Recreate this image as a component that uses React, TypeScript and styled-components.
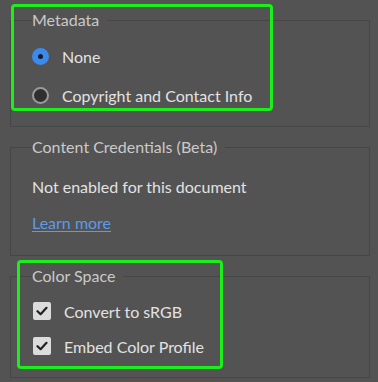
import styled, { createGlobalStyle } from "styled-components";

const GlobalStyle = createGlobalStyle`
  html, body {
    margin: 0;
    padding: 0;
    background: #535353;
  }
  body {
    font-family: Lato, "Open Sans", sans-serif;
  }
`;

const Panel = styled.div`
  position: relative;
  width: 378px;
  height: 382px;
  box-sizing: border-box;
  padding: 10px 8px 0 10px;
  display: flex;
  flex-direction: column;
  gap: 10px;
  background: #535353;
  overflow: hidden;
`;

const Group = styled.fieldset<{ $height: number }>`
  margin: 0;
  height: ${(p) => p.$height}px;
  box-sizing: border-box;
  border: 1px solid #464646;
  padding: 0 14px 0 21px;
  display: flex;
  flex-direction: column;
`;

const Legend = styled.legend`
  padding: 0 8px 0 0;
  margin-left: 0;
  font-size: 16px;
  line-height: 20px;
  color: #cacaca;
`;

const Options = styled.div<{ $gap: number; $top: number }>`
  display: flex;
  flex-direction: column;
  gap: ${(p) => p.$gap}px;
  padding-top: ${(p) => p.$top}px;
`;

const Row = styled.label`
  display: flex;
  align-items: center;
  gap: 13px;
  height: 22px;
  font-size: 16px;
  color: #e2e2e2;
  white-space: nowrap;
`;

const Radio = styled.span<{ $checked?: boolean }>`
  width: 17px;
  height: 17px;
  box-sizing: border-box;
  border-radius: 50%;
  flex: none;
  display: flex;
  align-items: center;
  justify-content: center;
  background: ${(p) => (p.$checked ? "#3a8af0" : "#2f2f2f")};
  border: 2px solid ${(p) => (p.$checked ? "#3a8af0" : "#9a9a9a")};
  &::after {
    content: "";
    display: ${(p) => (p.$checked ? "block" : "none")};
    width: 5px;
    height: 5px;
    border-radius: 50%;
    background: #1d1d1d;
  }
`;

const Checkbox = styled.span`
  width: 18px;
  height: 18px;
  border-radius: 2px;
  flex: none;
  background: #dcdcdc;
  display: flex;
  align-items: center;
  justify-content: center;
  margin-left: 1px;
`;

const Text = styled.div`
  font-size: 16px;
  line-height: 22px;
  color: #e2e2e2;
`;

const LearnMore = styled.a`
  font-size: 16px;
  line-height: 22px;
  color: #5b9bea;
  text-decoration: underline;
  text-underline-offset: 2px;
  align-self: flex-start;
`;

const Highlight = styled.div<{ $x: number; $y: number; $w: number; $h: number }>`
  position: absolute;
  left: ${(p) => p.$x}px;
  top: ${(p) => p.$y}px;
  width: ${(p) => p.$w}px;
  height: ${(p) => p.$h}px;
  box-sizing: border-box;
  border: 3px solid #19f019;
  border-radius: 4px;
  pointer-events: none;
`;

const Check = () => (
  <svg width="12" height="10" viewBox="0 0 12 10">
    <path d="M1.5 5.2 L4.6 8.2 L10.5 1.8" fill="none" stroke="#222" strokeWidth="2.2" strokeLinecap="round" strokeLinejoin="round" />
  </svg>
);

export default function App() {
  return (
    <>
      <GlobalStyle />
      <Panel>
        <Group $height={117}>
          <Legend>Metadata</Legend>
          <Options $gap={17} $top={15}>
            <Row>
              <Radio $checked />
              None
            </Row>
            <Row>
              <Radio />
              Copyright and Contact Info
            </Row>
          </Options>
        </Group>
        <Group $height={119}>
          <Legend>Content Credentials (Beta)</Legend>
          <Options $gap={14} $top={19}>
            <Text>Not enabled for this document</Text>
            <LearnMore href="#">Learn more</LearnMore>
          </Options>
        </Group>
        <Group $height={112}>
          <Legend>Color Space</Legend>
          <Options $gap={13} $top={14}>
            <Row>
              <Checkbox><Check /></Checkbox>
              Convert to sRGB
            </Row>
            <Row>
              <Checkbox><Check /></Checkbox>
              Embed Color Profile
            </Row>
          </Options>
        </Group>
        <Highlight $x={11} $y={4} $w={262} $h={107} />
        <Highlight $x={17} $y={260} $w={206} $h={109} />
      </Panel>
    </>
  );
}
